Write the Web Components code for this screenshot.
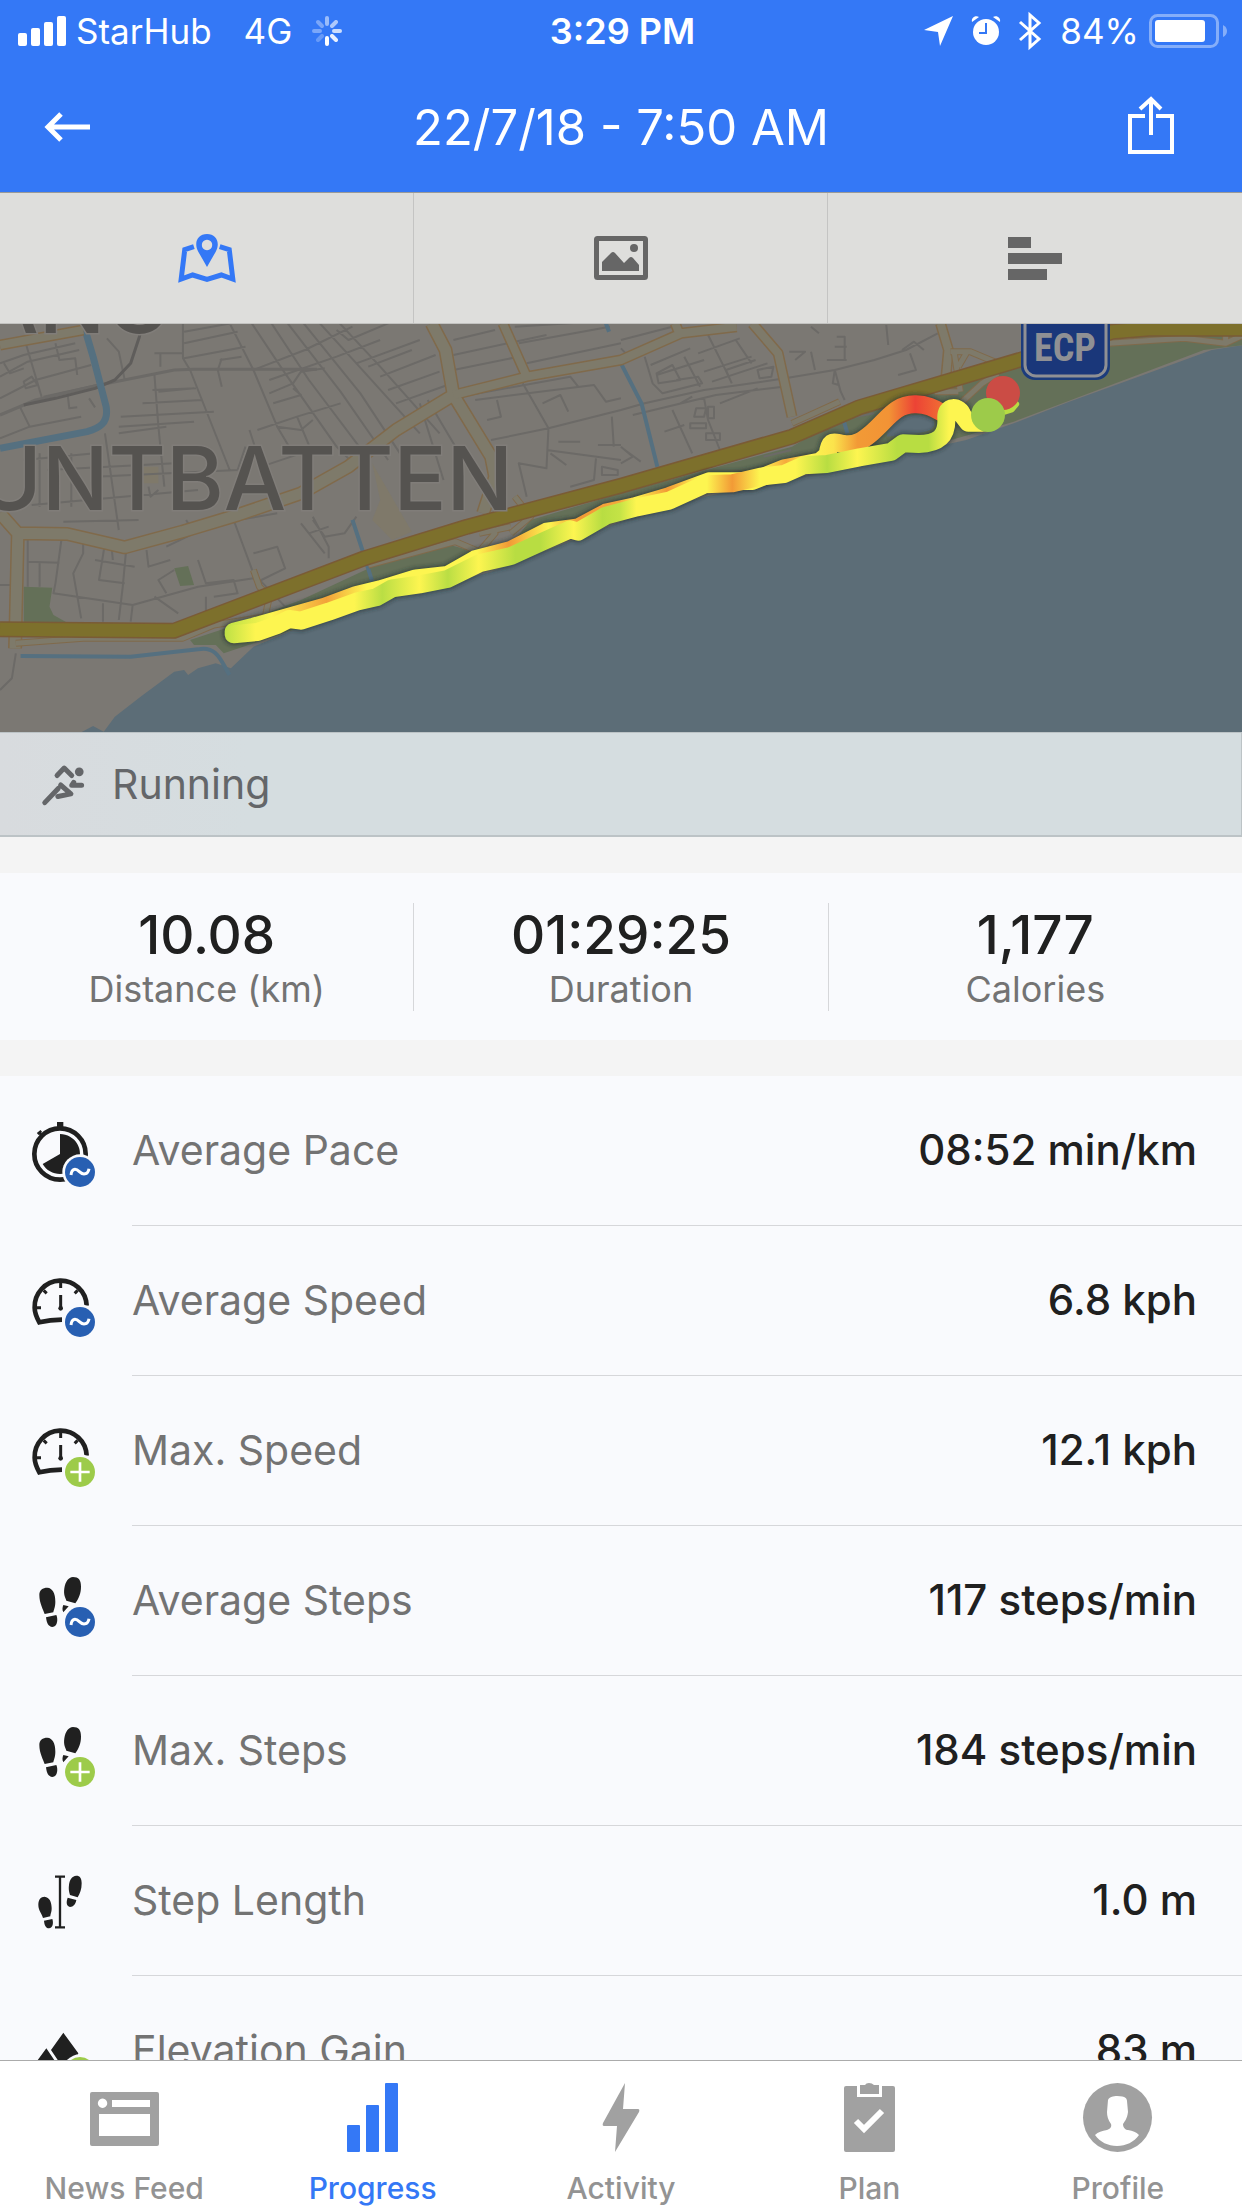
<!DOCTYPE html>
<html lang="en">
<head>
<meta charset="utf-8">
<meta name="viewport" content="width=device-width, initial-scale=1">
<title>22/7/18 - 7:50 AM</title>
<style>
  body {
    margin: 0;
    height: 100vh;
    font-family: Inter, "Liberation Sans", sans-serif;
    color: #202020;
    background: #f4f4f4;
  }
</style>
</head>
<body>
<workout-screen></workout-screen>

<script>
  // Icons: [width, height, viewBox, markup]
  const AVG = '<circle cx="144" cy="159" r="53" fill="#f9fafd"/><circle cx="144" cy="159" r="45" fill="#285fb2"/><path d="M117 168C119 147 132 148 142 158S168 168 171 149" fill="none" stroke="#fff" stroke-width="9"/>'
  const MAX = '<circle cx="144" cy="159" r="53" fill="#f9fafd"/><circle cx="144" cy="159" r="45" fill="#9dcb4a"/><path d="M115 159h58M144 130v58" stroke="#fff" stroke-width="8"/>'
  const GAUGE = '<g transform="translate(-96 -567)"><path d="M186 719Q150 719 118 727C112 716 104 700 104 683A78 78 0 0 1 260 677" fill="none" stroke="currentColor" stroke-width="14"/><path d="M182 608v16M131 631l9 9M233 631l-9 9M108 683h15M182 645v38" stroke="currentColor" stroke-width="9"/><circle cx="182" cy="685" r="7"/></g>'
  const FEET = '<g transform="translate(-96 -27)"><path d="M118 105C118 90 128 83 142 83C158 84 166 100 166 125C166 142 161 150 160 157L134 162C130 150 118 130 118 105ZM138 172L169 165C174 175 174 200 157 201C145 200 140 190 138 172ZM243 80C243 60 236 51 219 51C205 52 196 65 193 85C190 105 196 112 199 122L226 130C236 115 243 100 243 80ZM190 135L206 139L190 157C186 150 187 142 190 135Z"/></g>'

  const ICONS = {
    signal: [48, 30, '0 0 48 30', '<rect y="17" width="9" height="13" rx="2"/><rect x="13" y="12" width="9" height="18" rx="2"/><rect x="26" y="6" width="9" height="24" rx="2"/><rect x="39" width="9" height="30" rx="2"/>'],
    spinner: [30, 30, '0 0 30 30', '<g stroke="currentColor" stroke-width="4" stroke-linecap="round"><path d="M15 22v6"/><path d="M20 20l4 4" opacity=".9"/><path d="M22 15h6" opacity=".75"/><path d="M20 10l4-4" opacity=".6"/><path d="M15 8V2" opacity=".5"/><path d="M10 10L6 6M8 15H2" opacity=".35"/><path d="M10 20l-4 4" opacity=".25"/></g>'],
    location: [29, 30, '0 0 29 30', '<path d="M0 14L29 0L16 30L14 16Z"/>'],
    alarm: [28, 30, '0 0 28 30', '<circle cx="14" cy="16" r="13"/><path d="M0 6C-1 2 3 -1 7 1ZM28 6C29 2 25 -1 21 1Z"/><path d="M14 7v10H7" fill="none" stroke="#3478f6" stroke-width="2"/>'],
    bluetooth: [22, 36, '0 0 22 36', '<path d="M1 9L20 26L11 34V2L20 10L1 27" fill="none" stroke="currentColor" stroke-width="3"/>'],
    battery: [78, 34, '0 0 78 34', '<rect x="1.5" y="1.5" width="67" height="31" rx="7" fill="none" stroke="currentColor" stroke-width="3" opacity=".4"/><rect x="6" y="6" width="50" height="22" rx="3"/><path d="M74 11Q78 13 78 17T74 23Z" opacity=".4"/>'],
    back: [46, 30, '0 0 46 30', '<path d="M4 15H46M17 2L4 15L17 28" fill="none" stroke="currentColor" stroke-width="5"/>'],
    share: [46, 62, '0 0 46 62', '<path d="M17 20H2V56H44V20H28M23 3V39M12 13L23 3L33 13" fill="none" stroke="currentColor" stroke-width="4"/>'],
    map: [58, 48, '451 699 146 144', '<path d="M491 737L468 746L459 834L488 822L524 835L560 822L589 834L580 746L556 737" fill="none" stroke="currentColor" stroke-width="5" vector-effect="non-scaling-stroke"/><path fill-rule="evenodd" d="M524 798L502 752C490 725 500 699 524 699C548 699 558 725 546 752ZM524 716a13 16 0 1 0 .1 0Z"/>'],
    photo: [54, 44, '0 0 54 44', '<rect x="2.5" y="2.5" width="49" height="39" rx="1" fill="none" stroke="currentColor" stroke-width="5"/><path d="M8 35V26L17 17Q19 15 21 17L30 27L35 22Q37 20 39 22L45 29V35Z"/><circle cx="40" cy="12" r="4"/>'],
    splits: [54, 43, '0 0 54 43', '<path d="M0 0h23v11H0ZM0 16h54v11H0ZM0 32h39v11H0Z"/>'],
    running: [42, 40, '105 142 106 118', '<g fill="none" stroke="currentColor" stroke-width="5" stroke-linecap="round" stroke-linejoin="round"><path vector-effect="non-scaling-stroke" d="M143 176L161 154L180 176"/><path vector-effect="non-scaling-stroke" d="M205 205H180L185 196"/><path vector-effect="non-scaling-stroke" d="M152 204L178 230L145 238"/><path vector-effect="non-scaling-stroke" d="M112 256L146 214"/></g><ellipse cx="199" cy="165" rx="11" ry="13"/>'],
    pace: [64, 64, '0 0 192 192', '<g transform="translate(-96 -117)"><circle cx="180" cy="222" r="77" fill="none" stroke="currentColor" stroke-width="14"/><path d="M171 126h19v18h-19Z"/><path d="M113 162L124 153M116 156L128 170" stroke="currentColor" stroke-width="8"/><path d="M180 222V162A60 60 0 1 1 128 252Z"/></g>' + AVG],
    speed: [64, 64, '0 0 192 192', GAUGE + AVG],
    'speed-max': [64, 64, '0 0 192 192', GAUGE + MAX],
    steps: [64, 64, '0 0 192 192', FEET + AVG],
    'steps-max': [64, 64, '0 0 192 192', FEET + MAX],
    stride: [64, 64, '0 0 192 192', '<g transform="translate(-96 -927)"><path d="M115 1035C115 1018 122 1010 134 1010C148 1012 155 1025 155 1045C155 1058 151 1062 151 1069L129 1074C126 1062 115 1052 115 1035ZM132 1082L157 1077C161 1088 159 1104 147 1105C137 1104 133 1095 132 1082ZM245 970C245 955 240 947 229 947C215 948 209 960 207 975C205 990 208 997 210 1005L233 1012C240 1000 245 988 245 970ZM203 1013L229 1020C227 1032 220 1041 210 1041C199 1038 198 1027 203 1013Z"/><path d="M165 950h30M180 950v152M165 1102h30" stroke="currentColor" stroke-width="7"/></g>'],
    elevation: [64, 64, '0 0 192 192', '<g transform="translate(-96 -1377)"><path d="M190 1418L235 1480L210 1540H200L153 1470ZM139 1465L190 1540H84Z"/></g>' + MAX],
    feed: [69, 69, '0 0 69 69', '<path fill-rule="evenodd" d="M2 9H67Q69 9 69 11V61Q69 63 67 63H2Q0 63 0 61V11Q0 9 2 9ZM22 17V24H60V17ZM9 31V53H60V31ZM12.5 15.500a4.700 4.700 0 1 0 .1 0Z"/>'],
    progress: [69, 69, '0 0 69 69', '<rect x="9" y="42" width="13" height="27" rx="1"/><rect x="28" y="22" width="13" height="47" rx="1"/><rect x="47" width="13" height="69" rx="1"/>'],
    bolt: [69, 69, '0 0 69 69', '<path d="M38 0L36 26H51Q53 26 52 29L28 69L30 43H17Q15 43 16 40Z"/>'],
    plan: [69, 69, '0 0 69 69', '<path d="M11 3H22V14H47V3H58Q60 3 60 5V67Q60 69 58 69H11Q9 69 9 67V5Q9 3 11 3ZM25 11V2H30Q31 0 34 0T39 2H44V11Z"/><path d="M21 38L29 46L47 28" fill="none" stroke="#fff" stroke-width="6"/>'],
    profile: [69, 69, '0 0 69 69', '<circle cx="34.500" cy="34.500" r="34.500"/><path d="M25 17C26 13 34 13 34 13C43 13 44 16 44 18L45 29C44 36 42 38 40 41C40 45 43 47 45 47C50 48 53 49 56 52C51 59 43 63 34 63S17 59 12 52C15 49 19 48 24 47C27 46 29 44 28 41C25 37 24 33 24 29Z" fill="#fff"/>']
  }

  class AppIcon extends HTMLElement {
    constructor() {
      super()
      this.attachShadow({ mode: 'open' })
    }

    connectedCallback() {
      const [w, h, box, body] = ICONS[this.getAttribute('name')]
      this.shadowRoot.innerHTML = `
        <style>
          :host { display: block; flex: none; }
          svg { display: block; overflow: visible; fill: currentColor; }
        </style>
        <svg width="${w}" height="${h}" viewBox="${box}" preserveAspectRatio="none" aria-hidden="true">${body}</svg>
      `
    }
  }
  customElements.define('app-icon', AppIcon)

  class StatusBar extends HTMLElement {
    constructor() {
      super()
      this.attachShadow({ mode: 'open' })
      this.shadowRoot.innerHTML = `
        <style>
          :host {
            display: grid;
            grid-template-columns: 1fr auto 1fr;
            align-items: center;
            height: 62px;
            padding: 0 15px 0 18px;
            font-size: 35px;
          }
          div { display: flex; align-items: center; }
          .left { gap: 10px; }
          .net { padding: 0 10px 0 22px; }
          .right { justify-content: flex-end; gap: 19px; }
          .power { gap: 10px; }
          time { font-size: 36px; font-weight: 600; }
        </style>
        <div class="left">
          <app-icon name="signal"></app-icon>
          <span>StarHub</span>
          <span class="net">4G</span>
          <app-icon name="spinner"></app-icon>
        </div>
        <time>3:29 PM</time>
        <div class="right">
          <app-icon name="location"></app-icon>
          <app-icon name="alarm"></app-icon>
          <app-icon name="bluetooth"></app-icon>
          <div class="power"><span>84%</span><app-icon name="battery"></app-icon></div>
        </div>
      `
    }
  }
  customElements.define('status-bar', StatusBar)

  class NavBar extends HTMLElement {
    constructor() {
      super()
      this.attachShadow({ mode: 'open' })
      this.shadowRoot.innerHTML = `
        <style>
          :host {
            display: flex;
            align-items: center;
            justify-content: space-between;
            height: 130px;
            padding: 0 44px;
          }
          h1 { margin: 0; font-size: 49px; font-weight: 400; }
          button {
            display: flex;
            width: 70px;
            padding: 0;
            border: none;
            background: none;
            color: inherit;
          }
          button:last-child { justify-content: flex-end; padding-right: 24px; }
        </style>
        <button aria-label="Back"><app-icon name="back"></app-icon></button>
        <h1><slot></slot></h1>
        <button aria-label="Share"><app-icon name="share"></app-icon></button>
      `
    }
  }
  customElements.define('nav-bar', NavBar)

  class ViewTabs extends HTMLElement {
    constructor() {
      super()
      this.attachShadow({ mode: 'open' })
      this.shadowRoot.innerHTML = `
        <style>
          :host {
            display: grid;
            grid-template-columns: repeat(3, 1fr);
            height: 132px;
            box-sizing: border-box;
            border-top: 1px solid #9a9a98;
            border-bottom: 1px solid #c2c2c0;
            background: #dededc;
          }
          button {
            display: flex;
            align-items: center;
            justify-content: center;
            padding: 0;
            border: none;
            border-right: 1px solid #c4c4c3;
            background: none;
            color: #666;
          }
          button:last-child { border-right: none; }
          button[aria-pressed=true] { color: #3478f6; }
        </style>
        <button aria-label="Map" aria-pressed="true"><app-icon name="map"></app-icon></button>
        <button aria-label="Photos"><app-icon name="photo"></app-icon></button>
        <button aria-label="Splits"><app-icon name="splits"></app-icon></button>
      `
      this.botones = this.shadowRoot.querySelectorAll('button')
      this.botones.forEach(b => b.addEventListener('click', () => {
        this.botones.forEach(o => o.setAttribute('aria-pressed', o === b))
      }))
    }
  }
  customElements.define('view-tabs', ViewTabs)

  // Route geometry, drawn twice: a soft dark edge first, then the pace colours
  const BACK = 'M590 935L640 920L730 890L820 860L900 825L960 808L1050 775L1130 765L1200 718L1290 690L1380 635L1460 622L1530 578L1600 560L1690 528L1790 484L1900 483L1980 445L2070 425L2090 405C2095 350 2110 370 2130 372C2160 378 2180 360 2200 340C2240 300 2260 252 2311 253C2350 252 2370 275 2390 285'
  const FRONT = 'M590 943L650 936L700 915L730 897L760 902L830 875L900 845L950 832L990 805L1060 793L1130 777L1210 730L1290 708L1370 665L1440 628L1460 635L1530 587L1608 562L1690 542L1780 493L1850 490L1920 470L1980 462L2030 436L2088 432L2170 412L2250 396L2280 370L2320 372C2370 370 2390 350 2390 300C2385 250 2425 260 2430 285L2445 308L2480 308'

  class RouteMap extends HTMLElement {
    constructor() {
      super()
      this.attachShadow({ mode: 'open' })
      this.shadowRoot.innerHTML = `
        <style>
          :host { display: block; height: 408px; background: #5c6d77; }
          svg { display: block; width: 100%; height: 100%; }
          path { fill: none; vector-effect: non-scaling-stroke; stroke-linejoin: round; }
          .land { fill: #7b7873; }
          .park { fill: #647058; }
          .block { fill: #7f796a; }
          .lake { fill: #5c6d77; }
          .street { stroke: #6c6a67; stroke-width: 2; }
          .line { stroke: #6c6a67; stroke-width: 3; }
          .rail { stroke: #5f5d5b; stroke-width: 3; }
          .river { stroke: #557080; }
          .edge { stroke: #806a4b; }
          .road { stroke: #7e7a6a; }
          .route { stroke-linecap: round; stroke-width: 18; }
          .tail { stroke: #b8dd42; stroke-width: 6; stroke-linecap: round; }
          .shade { stroke-linecap: round; stroke-width: 21; stroke: #222c2e; opacity: .6; }
          .place { font-size: 88px; font-weight: 500; fill: #555350; stroke: #807d79; stroke-width: 3; paint-order: stroke; }
          .sign { font: bold 38px "Liberation Sans Narrow", "Roboto Condensed", "Liberation Sans", sans-serif; fill: #8f9094; }
        </style>
        <svg viewBox="0 0 1242 408" preserveAspectRatio="xMidYMid slice" role="img" aria-label="Route map">
          <defs>
            <filter id="soft" filterUnits="userSpaceOnUse" x="0" y="0" width="1242" height="408"><feGaussianBlur stdDeviation="2"/></filter>
            <linearGradient id="front" gradientUnits="userSpaceOnUse" x1="565" y1="0" x2="2565" y2="0">
              <stop offset="0" stop-color="#bbe045"/><stop offset=".04" stop-color="#fdf550"/>
              <stop offset=".165" stop-color="#fdf550"/><stop offset=".2" stop-color="#bade44"/>
              <stop offset=".247" stop-color="#fdf550"/><stop offset=".283" stop-color="#bade44"/>
              <stop offset=".322" stop-color="#fdf550"/><stop offset=".368" stop-color="#b8dd42"/>
              <stop offset=".4" stop-color="#b8dd42"/><stop offset=".442" stop-color="#fdf550"/>
              <stop offset=".478" stop-color="#b8dd42"/><stop offset=".5" stop-color="#c4e346"/>
              <stop offset=".521" stop-color="#fdf550"/><stop offset=".61" stop-color="#fdf550"/>
              <stop offset=".642" stop-color="#f29a36"/><stop offset=".677" stop-color="#fdf550"/>
              <stop offset=".722" stop-color="#fdf550"/><stop offset=".762" stop-color="#b8dd42"/>
              <stop offset=".8" stop-color="#fdf550"/><stop offset=".85" stop-color="#b8dd42"/>
              <stop offset=".89" stop-color="#b8dd42"/><stop offset=".916" stop-color="#fdf550"/>
            </linearGradient>
            <linearGradient id="back" gradientUnits="userSpaceOnUse" x1="565" y1="0" x2="2565" y2="0">
              <stop offset="0" stop-color="#bbe045"/><stop offset=".06" stop-color="#fdf550"/>
              <stop offset=".13" stop-color="#f2a23a"/><stop offset=".18" stop-color="#fdf550"/>
              <stop offset=".32" stop-color="#fdf550"/><stop offset=".36" stop-color="#f29a36"/>
              <stop offset=".41" stop-color="#fdf550"/><stop offset=".45" stop-color="#f29a36"/>
              <stop offset=".5" stop-color="#f5a93c"/><stop offset=".52" stop-color="#fdf550"/>
              <stop offset=".56" stop-color="#f29a36"/><stop offset=".6" stop-color="#fdf550"/>
              <stop offset=".68" stop-color="#fdf550"/><stop offset=".71" stop-color="#f5a93c"/>
              <stop offset=".74" stop-color="#fdf550"/><stop offset=".77" stop-color="#fbe34c"/>
              <stop offset=".8" stop-color="#f29a36"/><stop offset=".84" stop-color="#f29335"/>
              <stop offset=".873" stop-color="#ec4335"/><stop offset=".905" stop-color="#f06a34"/>
            </linearGradient>
          </defs>
          <g transform="translate(0 -4) scale(.396 .33333)">
            <path class="land" d="M0 0H3140V75L3060 90L2840 185L2700 245L2560 310L2440 360L2250 410L2080 455L1780 530L1600 590L1460 655L1240 755L1000 830L740 930L640 980L583 1045L545 1030L500 1045L475 1065L465 1050L440 1055L355 1130L290 1190L262 1235L235 1218L200 1240H0Z"/>
            <path class="park" d="M60 800L132 803L125 860L135 885L170 908L60 905ZM440 745L475 738L490 795L455 798ZM480 960L570 925L760 840L940 740L1120 670L1200 695L1300 660L1340 600L1568 520L2000 380L2140 280L2330 220L2560 130L2820 70L2900 40L3140 45V75L3040 90L2560 305L2300 395L2000 450L1620 575L1460 640L1200 755L740 930L565 1000L545 975H490Z"/>
            <path class="block" d="M940 430L1040 635L990 660L940 600L960 540ZM340 440h60v50h-60Z"/>
            <path class="lake" d="M2240 340C2260 300 2280 285 2310 285C2360 285 2370 310 2350 330C2300 350 2260 345 2240 350Z"/>

            <path class="street" d="M0 130L60 105L190 70M0 170L70 125L200 90M0 235L90 180L230 135M65 70L105 230M140 70L150 120L190 115L195 165M10 130L25 160L60 145M60 185L80 170L95 195L65 205ZM110 230L245 195M50 260L75 320L205 290M170 215L175 265L195 262M75 320L0 355M225 235L240 262M270 55L300 95L315 180M390 100H460M405 100V140M390 165L400 320L415 500M400 215L490 205M465 35L630 0M465 70L600 35M465 115L620 80M462 0V115L480 150L560 390L580 450M560 115L550 150L560 200M555 120L610 110M580 10L640 150L700 320L740 400M630 0L720 160L850 380L900 440M680 0L780 180L920 400M720 0L860 215L980 420M760 0L910 220L1010 400M800 0L900 130L1060 340M850 0L960 140L1110 340M640 150L770 90L890 20M680 180L850 110L960 60M680 220L740 190L760 155L820 145M690 250L760 225L740 205M650 330L750 290L860 250M630 330L660 440L760 400M750 290L780 375M700 320L760 330L790 300M850 30L880 60L1000 0M900 130L1060 60M960 170L1100 105M930 140L1040 90M980 210L1110 155M1000 250L1130 195M1060 250L1120 480M1080 240L1160 400M1145 60L1250 30M1145 105L1380 45M1145 150L1310 110M1300 20L1568 0M1310 70L1540 20M1330 130L1568 70M1200 240L1500 195L1530 245L1568 235M1185 225L1440 170L1460 200M1230 300L1265 290L1255 240M1320 190L1385 325L1568 270M1370 250L1415 225L1435 275M1385 325L1380 445L1310 430L1330 530M1240 360L1385 325M1380 390L1568 420M1390 400L1430 435M1410 365H1465M1440 500L1500 480L1505 415M1510 375H1568M1520 440L1560 450V465H1520ZM1545 290L1550 380M300 320L490 305M305 290L540 275M360 250L510 240M385 210L495 205M265 340L300 630M300 340L420 320M100 400V560M180 400V560M120 450L440 430M60 420L240 400M80 555L500 510M240 470L600 450M160 605L350 600M375 500L380 530L400 510M600 450L620 380M590 600L640 760L720 860M600 600L700 580M470 600L490 640L420 680M640 700L700 680L720 745L660 780M155 660L140 790L135 820L335 855L500 800L640 775M70 660V800M70 725L150 728M100 725V800M210 660V700L185 760L205 895M265 670L250 780L315 790M320 670L310 800L300 900M240 720L340 740M280 660L285 720M370 690L375 740L430 720M440 750L400 780L420 820M500 720L520 790L590 780L600 820L540 830M520 830V880M335 855L330 905M260 850V905M390 830L450 880M760 610L820 700M790 590L830 680L830 715M780 640L830 620M900 590L870 640L820 650L790 600M0 795H25M40 1000L30 1075L0 1110"/>
            <g transform="translate(1568 0)">
              <path class="street" d="M0 60L130 20M0 85L20 110M60 110L80 190L105 220L205 190L195 170L140 180M75 135L175 85M90 165L210 120M90 160L95 190L150 180L130 135ZM160 110L200 200M195 100L300 55M220 45L260 140L280 190M210 155L330 110M230 185L370 130M280 190L265 150L340 120M290 60L330 130M350 175L345 150L385 140L380 170ZM425 95H465L440 120M480 95L490 150M520 120H570M540 80H570M545 50H565V120M480 20L500 40M670 15L675 75M710 90L740 65L765 90M730 100L745 150L700 165M415 175L540 150L640 120L720 90L800 40M540 150L555 215L565 240M540 150L535 190L550 195M0 270L60 250L210 210L415 175M30 285L240 225L410 200M130 270L180 400M150 250L180 230M210 235L220 300L250 390M220 260H235V295H220ZM190 265H215L210 290H185ZM175 310H215V325H175ZM110 335L160 315M215 340H250V360H215ZM250 250L345 205M0 380L30 410L0 430M10 390L50 425M550 300L640 280M360 410L430 390"/>
            </g>
            <path class="line" d="M0 285L90 240L250 195L440 150L490 148L800 148"/>
            <path class="rail" d="M60 255L140 235L240 205L290 180L330 130L352 50L358 20"/>
            <path class="river" stroke-width="7" d="M215 30L235 110L268 260C275 310 250 325 220 335L0 385"/>
            <path class="river" stroke-width="4" d="M52 1008L330 1010L500 988C550 975 560 1030 580 1065M890 600L915 690L940 785M1568 130L1620 250L1660 440M1530 10L1538 35M2130 300L2140 340"/>

            <path class="edge" stroke-width="14" d="M0 580L45 640L170 642L315 682L460 635L600 585L760 520L880 440L1000 330L1145 225M45 640L38 985M1090 10L1125 90L1145 225L1240 410L1250 470L1220 580"/>
            <path class="edge" stroke-width="11" d="M1145 225L1330 170L1568 120L1720 40L1860 20M1330 170L1270 10M1900 10L1965 100L2000 290M2375 10L2395 90L2385 220M1715 40L1705 10M0 75L210 30"/>
            <path class="road" stroke-width="11" d="M0 580L45 640L170 642L315 682L460 635L600 585L760 520L880 440L1000 330L1145 225M45 640L38 985M1090 10L1125 90L1145 225L1240 410L1250 470L1220 580"/>
            <path class="road" stroke-width="8" d="M1145 225L1330 170L1568 120L1720 40L1860 20M1330 170L1270 10M1900 10L1965 100L2000 290M2375 10L2395 90L2385 220M1715 40L1705 10M0 75L210 30"/>
            <path class="edge" stroke-width="7" d="M40 970L210 955H460L540 915L670 890L680 830L655 800L640 750M930 735L1150 665L1210 695L1250 640L1235 600M1210 640L1290 620M1300 530L1340 590L1290 640M2000 310L2120 245M2400 95L2450 95L2520 130M2410 100L2425 215M2440 100L2420 140M2360 215L2420 215M2430 245L2480 190L2520 160M2800 70L2990 55L3095 70L3140 45M3095 70V40"/>
            <path class="road" stroke-width="5" d="M40 970L210 955H460L540 915L670 890L680 830L655 800L640 750M930 735L1150 665L1210 695L1250 640L1235 600M1210 640L1290 620M1300 530L1340 590L1290 640M2000 310L2120 245M2400 95L2450 95L2520 130M2410 100L2425 215M2440 100L2420 140M2360 215L2420 215M2430 245L2480 190L2520 160M2800 70L2990 55L3095 70L3140 45M3095 70V40"/>
            <path stroke="#7a5b36" stroke-width="16" d="M0 928L440 932L920 715L1180 620L1568 497L2000 350L2170 262L2580 118L2810 35L2900 26H3140"/>
            <path stroke="#7d702c" stroke-width="13" d="M0 928L440 932L920 715L1180 620L1568 497L2000 350L2170 262L2580 118L2810 35L2900 26H3140"/>
          </g>

          <text class="place" x="171" y="9" text-anchor="end">ANG</text>
          <text class="place" x="513" y="186" text-anchor="end">UNTBATTEN</text>

          <g filter="url(#soft)">
            <g transform="translate(0 -4) scale(.396 .33333)">
              <path class="shade" d="${BACK}"/>
              <path class="shade" d="${FRONT}"/>
            </g>
          </g>
          <g transform="translate(0 -4) scale(.396 .33333)">
            <path class="route" stroke="url(#back)" d="${BACK}"/>
            <path class="route" stroke="url(#front)" d="${FRONT}"/>
            <path class="tail" d="M2535 276L2555 268L2566 252"/>
          </g>
          <rect x="1021" y="-30" width="89" height="86" rx="14" fill="#1c3c7c"/>
          <rect x="1025" y="-26" width="81" height="78" rx="11" fill="#1a377a" stroke="#8f9094" stroke-width="3"/>
          <text class="sign" x="1065" y="37" text-anchor="middle">ECP</text>
          <circle cx="1003" cy="69" r="17" fill="#cb4c45"/>
          <circle cx="988" cy="91" r="17" fill="#9dcb4a"/>
        </svg>
      `
    }
  }
  customElements.define('route-map', RouteMap)

  class ActivityType extends HTMLElement {
    constructor() {
      super()
      this.attachShadow({ mode: 'open' })
      this.shadowRoot.innerHTML = `
        <style>
          :host {
            display: flex;
            align-items: center;
            gap: 28px;
            height: 105px;
            box-sizing: border-box;
            padding: 0 42px;
            border: 1px solid #bcc3c6;
            border-width: 1px 1px 2px 0;
            background: linear-gradient(90deg, #d8dbde, #d5dde0 20%);
            color: #646669;
            font-size: 41px;
          }
        </style>
        <app-icon name="running"></app-icon>
        <span><slot></slot></span>
      `
    }
  }
  customElements.define('activity-type', ActivityType)

  class SummaryStat extends HTMLElement {
    constructor() {
      super()
      this.attachShadow({ mode: 'open' })
      this.shadowRoot.innerHTML = `
        <style>
          :host {
            flex: 1 1 0;
            display: flex;
            flex-direction: column;
            align-items: center;
            height: 108px;
            box-sizing: border-box;
            border-right: 1px solid #d6d7da;
          }
          :host(:last-child) { border-right: none; }
          .value { font-size: 53px; line-height: 64px; font-weight: 500; }
          .label { font-size: 36px; line-height: 44px; color: #737373; }
        </style>
        <span class="value"><slot></slot></span>
        <span class="label"><slot name="label"></slot></span>
      `
    }
  }
  customElements.define('summary-stat', SummaryStat)

  class MetricRow extends HTMLElement {
    constructor() {
      super()
      this.attachShadow({ mode: 'open' })
      this.shadowRoot.innerHTML = `
        <style>
          :host { display: flex; height: 150px; padding-left: 32px; }
          .icon { width: 100px; height: 149px; display: flex; align-items: center; flex: none; }
          .text {
            flex: 1;
            display: flex;
            align-items: center;
            justify-content: space-between;
            padding: 0 45px 2px 0;
            border-bottom: 1px solid #d6d7da;
          }
          .label { font-size: 41px; color: #737373; }
          .value { font-size: 42px; font-weight: 500; }
        </style>
        <div class="icon"><app-icon name="${this.getAttribute('icon')}"></app-icon></div>
        <div class="text">
          <span class="label"><slot name="label"></slot></span>
          <span class="value"><slot></slot></span>
        </div>
      `
    }
  }
  customElements.define('metric-row', MetricRow)

  class TabLink extends HTMLElement {
    constructor() {
      super()
      this.attachShadow({ mode: 'open' })
      this.shadowRoot.innerHTML = `
        <style>
          :host { flex: 1 1 0; color: #939393; }
          :host([active]) { color: #3478f6; }
          a {
            display: flex;
            flex-direction: column;
            align-items: center;
            gap: 18px;
            padding-top: 22px;
            color: inherit;
            text-decoration: none;
            font-size: 30px;
            line-height: 36px;
            font-weight: 500;
          }
          app-icon { color: #a1a1a1; }
          :host([active]) app-icon { color: inherit; }
        </style>
        <a href="#${this.getAttribute('icon')}">
          <app-icon name="${this.getAttribute('icon')}"></app-icon>
          <span><slot></slot></span>
        </a>
      `
    }
  }
  customElements.define('tab-link', TabLink)

  class WorkoutScreen extends HTMLElement {
    constructor() {
      super()
      this.attachShadow({ mode: 'open' })
      this.shadowRoot.innerHTML = `
        <style>
          :host { display: flex; flex-direction: column; height: 100%; }
          header { background: #3478f6; color: #fff; }
          main { flex: 1; min-height: 0; overflow: hidden; }
          .summary {
            display: flex;
            margin: 36px 0;
            padding: 30px 0 29px;
            background: #f9fafd;
          }
          .metrics { background: #f9fafd; }
          nav {
            display: flex;
            height: 147px;
            border-top: 1px solid #ababab;
            background: #fff;
          }
        </style>
        <header>
          <status-bar></status-bar>
          <nav-bar>22/7/18 - 7:50 AM</nav-bar>
        </header>
        <main>
          <view-tabs></view-tabs>
          <route-map></route-map>
          <activity-type>Running</activity-type>
          <section class="summary">
            <summary-stat>10.08<span slot="label">Distance (km)</span></summary-stat>
            <summary-stat>01:29:25<span slot="label">Duration</span></summary-stat>
            <summary-stat>1,177<span slot="label">Calories</span></summary-stat>
          </section>
          <section class="metrics">
            <metric-row icon="pace"><span slot="label">Average Pace</span>08:52 min/km</metric-row>
            <metric-row icon="speed"><span slot="label">Average Speed</span>6.8 kph</metric-row>
            <metric-row icon="speed-max"><span slot="label">Max. Speed</span>12.1 kph</metric-row>
            <metric-row icon="steps"><span slot="label">Average Steps</span>117 steps/min</metric-row>
            <metric-row icon="steps-max"><span slot="label">Max. Steps</span>184 steps/min</metric-row>
            <metric-row icon="stride"><span slot="label">Step Length</span>1.0 m</metric-row>
            <metric-row icon="elevation"><span slot="label">Elevation Gain</span>83 m</metric-row>
          </section>
        </main>
        <nav>
          <tab-link icon="feed">News Feed</tab-link>
          <tab-link icon="progress" active>Progress</tab-link>
          <tab-link icon="bolt">Activity</tab-link>
          <tab-link icon="plan">Plan</tab-link>
          <tab-link icon="profile">Profile</tab-link>
        </nav>
      `
    }
  }
  customElements.define('workout-screen', WorkoutScreen)
</script>
</body>
</html>
